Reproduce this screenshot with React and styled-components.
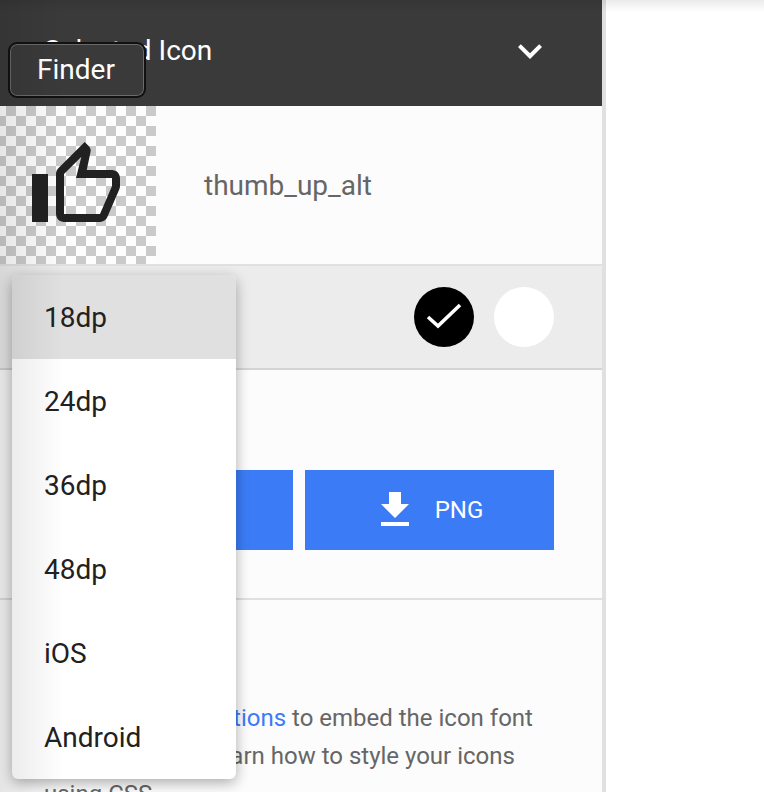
import React from 'react';
import styled, { createGlobalStyle } from 'styled-components';

const GlobalStyle = createGlobalStyle`
  html, body { margin: 0; padding: 0; background: #fff; }
  body { font-family: Roboto, "Liberation Sans", sans-serif; }
`;

const Page = styled.div`
  position: relative;
  width: 764px;
  height: 792px;
  overflow: hidden;
  background: #fff;
`;

const Panel = styled.aside`
  width: 602px;
  height: 792px;
  overflow: hidden;
  background: #fcfcfc;
  border-right: 4px solid #e0e0e0;
`;

const Header = styled.header`
  display: flex;
  align-items: center;
  justify-content: space-between;
  height: 106px;
  padding: 0 48px 6px 44px;
  box-sizing: border-box;
  background: #3a3a3a;
  color: #fff;
`;

const HeaderTitle = styled.h2`
  margin: 0;
  font-size: 28px;
  font-weight: 400;
`;

const Chevron = styled.svg`
  display: block;
  width: 48px;
  height: 48px;
  margin-top: 2px;
  fill: #fff;
`;

const PreviewRow = styled.section`
  display: flex;
  align-items: center;
  height: 160px;
  border-bottom: 2px solid #e0e0e0;
  box-sizing: border-box;
`;

const Checker = styled.div`
  display: flex;
  align-items: center;
  width: 156px;
  height: 158px;
  padding-left: 28px;
  box-sizing: border-box;
  background: repeating-conic-gradient(#fdfdfd 0 25%, #cacaca 0 50%) 6px 0 / 20px 20px;
`;

const IconGlyph = styled.svg`
  display: block;
  width: 96px;
  height: 96px;
  margin-top: 2px;
  fill: #212121;
`;

const IconName = styled.span`
  margin-left: 48px;
  font-size: 28px;
  color: #666;
`;

const ColorRow = styled.section`
  display: flex;
  align-items: center;
  justify-content: flex-end;
  gap: 20px;
  height: 104px;
  padding: 0 48px 0 44px;
  box-sizing: border-box;
  background: #ececec;
  border-bottom: 2px solid #d4d4d4;
`;

const Swatch = styled.button`
  display: flex;
  align-items: center;
  justify-content: center;
  width: 60px;
  height: 60px;
  padding: 0;
  border: 0;
  border-radius: 50%;
  background: ${(p) => (p.$dark ? '#000' : '#fff')};
`;

const DownloadSection = styled.section`
  display: flex;
  gap: 12px;
  height: 230px;
  padding: 100px 48px 0 44px;
  box-sizing: border-box;
  border-bottom: 2px solid #e0e0e0;
`;

const DownloadButton = styled.button`
  display: flex;
  align-items: center;
  justify-content: center;
  gap: 16px;
  width: 249px;
  height: 80px;
  padding: 0 5px 0 0;
  border: 0;
  background: #3b7cf6;
  color: #fff;
  font-family: inherit;
  font-size: 24px;
  font-weight: 400;
`;

const DownloadIcon = styled.svg`
  display: block;
  width: 48px;
  height: 48px;
  fill: #fff;
`;

const Notes = styled.p`
  margin: 0;
  padding: 99px 60px 0 44px;
  font-size: 24px;
  line-height: 38px;
  color: #666;
`;

const NoteLink = styled.a`
  color: #3b7cf6;
`;

const SizeMenu = styled.ul`
  position: absolute;
  left: 12px;
  top: 275px;
  width: 224px;
  margin: 0;
  padding: 0;
  overflow: hidden;
  list-style: none;
  background: #fff;
  border-radius: 6px;
  box-shadow: 0 4px 14px rgba(0, 0, 0, 0.32);
`;

const SizeOption = styled.li`
  display: flex;
  align-items: center;
  height: 84px;
  padding-left: 32px;
  font-size: 28px;
  color: #212121;
  background: ${(p) => (p.$active ? '#e0e0e0' : 'transparent')};
`;

const FinderTip = styled.div`
  position: absolute;
  left: 8px;
  top: 42px;
  display: flex;
  align-items: center;
  justify-content: center;
  width: 138px;
  height: 56px;
  padding: 0 2px 1px 0;
  box-sizing: border-box;
  background: #3a3a3a;
  border: 2px solid #111;
  border-radius: 9px;
  box-shadow: inset 0 0 0 1px #6a6a6a;
  color: #fff;
  font-size: 28px;
`;

const LeftShade = styled.div`
  position: absolute;
  left: 0;
  top: 0;
  bottom: 0;
  width: 64px;
  pointer-events: none;
  background: linear-gradient(to right, rgba(0, 0, 0, 0.09), rgba(0, 0, 0, 0));
`;

const TopShade = styled.div`
  position: absolute;
  left: 0;
  right: 0;
  top: 0;
  height: 12px;
  pointer-events: none;
  background: linear-gradient(to bottom, rgba(0, 0, 0, 0.08), rgba(0, 0, 0, 0));
`;

const sizes = ['18dp', '24dp', '36dp', '48dp', 'iOS', 'Android'];

const downloadPath = 'M19 9h-4V3H9v6H5l7 7 7-7zM5 18v2h14v-2H5z';

export default function App() {
  return (
    <Page>
      <GlobalStyle />
      <Panel>
        <Header>
          <HeaderTitle>Selected Icon</HeaderTitle>
          <Chevron viewBox="0 0 24 24">
            <path d="M7.41 8.59L12 13.17l4.59-4.58L18 10l-6 6-6-6z" />
          </Chevron>
        </Header>
        <PreviewRow>
          <Checker>
            <IconGlyph viewBox="0 0 24 24">
              <path d="M9 21h9c.83 0 1.54-.5 1.84-1.22l3.02-7.05c.09-.23.14-.47.14-.73v-2c0-1.1-.9-2-2-2h-6.31l.95-4.57.03-.32c0-.41-.17-.79-.44-1.06L14.17 1 7.58 7.59C7.22 7.95 7 8.45 7 9v10c0 1.1.9 2 2 2zM9 9l4.34-4.34L12 10h9v2l-3 7H9V9zM1 9h4v12H1z" />
            </IconGlyph>
          </Checker>
          <IconName>thumb_up_alt</IconName>
        </PreviewRow>
        <ColorRow>
          <Swatch $dark>
            <svg width="36" height="28" viewBox="0 0 36 28" fill="none" stroke="#fff" strokeWidth="3.6">
              <path d="M2 14l10 9L34 2" />
            </svg>
          </Swatch>
          <Swatch />
        </ColorRow>
        <DownloadSection>
          <DownloadButton>
            <DownloadIcon viewBox="0 0 24 24">
              <path d={downloadPath} />
            </DownloadIcon>
            SVG
          </DownloadButton>
          <DownloadButton>
            <DownloadIcon viewBox="0 0 24 24">
              <path d={downloadPath} />
            </DownloadIcon>
            PNG
          </DownloadButton>
        </DownloadSection>
        <Notes>
          Follow the <NoteLink>instructions</NoteLink> to embed the icon font in your site and learn how to style your icons using CSS.
        </Notes>
      </Panel>
      <SizeMenu>
        {sizes.map((size, i) => (
          <SizeOption key={size} $active={i === 0}>
            {size}
          </SizeOption>
        ))}
      </SizeMenu>
      <FinderTip>Finder</FinderTip>
      <LeftShade />
      <TopShade />
    </Page>
  );
}
